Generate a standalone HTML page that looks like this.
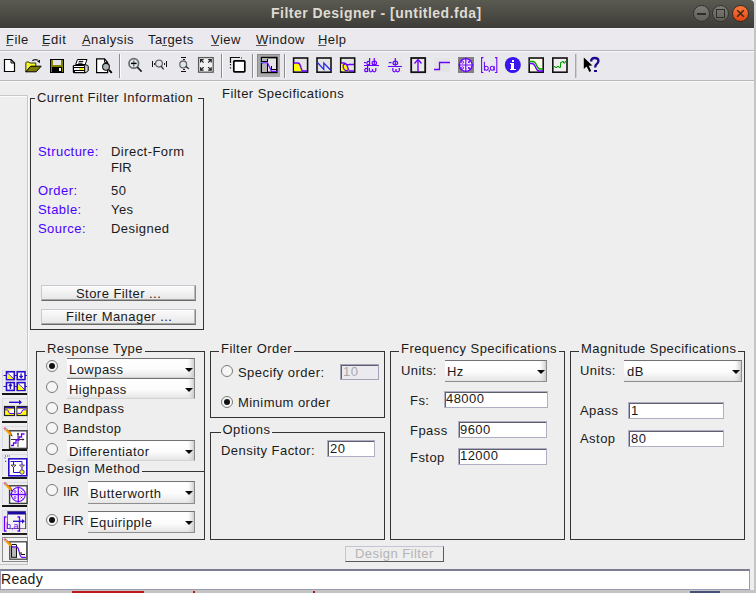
<!DOCTYPE html>
<html><head><meta charset="utf-8">
<style>
*{margin:0;padding:0;box-sizing:border-box}
html,body{width:756px;height:593px;overflow:hidden;background:#eeeeee;font-family:"Liberation Sans",sans-serif;font-size:13px;color:#222}
.a{position:absolute}
.t{position:absolute;white-space:pre;line-height:13px;font-size:13px;letter-spacing:0.45px;color:#1a1a1a}
.b{color:#4a00ff}
#title{left:0;top:0;width:754px;height:28px;background:linear-gradient(#5b5a51,#3d3c38);border-radius:0 4px 0 0}
#menu{left:0;top:28px;width:754px;height:22px;background:#ebe9ed;border-top:1px solid #f4f3f5}
#tb{left:0;top:50px;width:754px;height:31px;background:#e9e8ec;border-top:1px solid #b8b7bb;border-bottom:1px solid #b8b7bb;box-shadow:inset 0 1px 0 #f8f8fa}
.sep{position:absolute;top:54px;width:1px;height:24px;background:#8c8c8c;box-shadow:1px 0 0 #fafafa}
.frame{position:absolute;border:1px solid #333}
.ftitle{position:absolute;white-space:pre;line-height:13px;font-size:13px;letter-spacing:0.45px;color:#1a1a1a;background:#eeeeee;padding:0 2px 0 2px}
.dd{position:absolute;background:linear-gradient(#ffffff 0%,#fcfcfc 55%,#e6e6e6 100%);border-top:1px solid #727272;border-right:1px solid #8a8a8a;border-bottom:1px solid #8e8e8e;box-shadow:inset -6px 0 5px -4px #c4c4c4}
.dd.nb{border-bottom-color:#d4d4d4}
.dd .arr{position:absolute;right:1.5px;top:8.5px;width:0;height:0;border-left:4.5px solid transparent;border-right:4.5px solid transparent;border-top:4.5px solid #0a0a0a}
.radio{position:absolute;width:12px;height:12px;border-radius:50%;border:1px solid #7a7a7a;background:#f6f6f6}
.radio.on::after{content:"";position:absolute;left:2px;top:2px;width:6px;height:6px;border-radius:50%;background:#111}
.tx{position:absolute;background:#fff;border:1px solid #aeaec4;box-shadow:inset 1px 1px 0 #5e5e6e}
.btn{position:absolute;background:linear-gradient(#fbfbfb,#e6e6e6);border:1px solid #c8c8d0;border-bottom:1px solid #6a6a6a;border-right:1px solid #8a8a8a;box-shadow:inset 0 -1px 0 #a8a8a8,inset -1px 0 0 #b8b8b8}
.lt{position:absolute;left:2px;width:26px;height:2px;background:#222}
</style></head><body>

<!-- title bar -->
<div id="title" class="a"></div>
<div class="a" style="left:754px;top:0;width:2px;height:593px;background:#c4c4c4"></div>
<div class="a" style="left:754px;top:0;width:2px;height:28px;background:#d4d4d4"></div>
<div class="t" style="left:271px;top:5.5px;font-size:14px;line-height:14px;font-weight:bold;color:#dfdbd2;letter-spacing:0.48px">Filter Designer - [untitled.fda]</div>
<div class="a" style="left:693px;top:5px;width:17px;height:17px;border-radius:50%;background:linear-gradient(#7d7c76,#5f5e59);border:1px solid #34332f"></div>
<div class="a" style="left:697px;top:13px;width:9px;height:2px;background:#2f2e2a"></div>
<div class="a" style="left:712px;top:5px;width:17px;height:17px;border-radius:50%;background:linear-gradient(#7d7c76,#5f5e59);border:1px solid #34332f"></div>
<div class="a" style="left:716px;top:9px;width:9px;height:9px;border:1.5px solid #2f2e2a"></div>
<div class="a" style="left:732px;top:5px;width:17px;height:17px;border-radius:50%;background:linear-gradient(#f97a3e,#e5450f);border:1px solid #3a2a20"></div>
<svg class="a" style="left:732px;top:5px" width="17" height="17"><path d="M5.2 5.2 L11.8 11.8 M11.8 5.2 L5.2 11.8" stroke="#3a2a1a" stroke-width="1.6"/></svg>

<!-- menu -->
<div id="menu" class="a"></div>
<div class="t" style="left:6px;top:33px">File</div>
<div class="t" style="left:42px;top:33px">Edit</div>
<div class="t" style="left:82px;top:33px">Analysis</div>
<div class="t" style="left:148px;top:33px">Targets</div>
<div class="t" style="left:211px;top:33px">View</div>
<div class="t" style="left:256px;top:33px">Window</div>
<div class="t" style="left:318px;top:33px">Help</div>

<div class="a" style="left:6px;top:45px;width:7px;height:1px;background:#555"></div>
<div class="a" style="left:42px;top:45px;width:7px;height:1px;background:#555"></div>
<div class="a" style="left:82px;top:45px;width:8px;height:1px;background:#555"></div>
<div class="a" style="left:162px;top:45px;width:5px;height:1px;background:#555"></div>
<div class="a" style="left:211px;top:45px;width:8px;height:1px;background:#555"></div>
<div class="a" style="left:256px;top:45px;width:11px;height:1px;background:#555"></div>
<div class="a" style="left:318px;top:45px;width:8px;height:1px;background:#555"></div>
<!-- toolbar -->
<div id="tb" class="a"></div>
<div class="a" style="left:0;top:81px;width:754px;height:1px;background:#fafafa"></div>
<!-- toolbar icons -->
<svg class="a" style="left:0;top:50px" width="620" height="32" viewBox="0 50 620 32" shape-rendering="crispEdges">
<!-- new -->
<path d="M4.5 59.5 H11 L14.5 63 V71.5 H4.5 Z" fill="#fff" stroke="#000" stroke-width="1.2" shape-rendering="auto"/>
<path d="M11 59.5 V63 H14.5" fill="none" stroke="#000" stroke-width="1" shape-rendering="auto"/>
<!-- open -->
<path d="M25.8 71.8 V62.6 Q26 62 27 62 H29 L29.8 63 H35.8 V66.5 H31 L26.5 71.8 Z" fill="#f8f820" stroke="#222210" stroke-width="0.9" shape-rendering="auto"/>
<path d="M26.3 63.5 V71" stroke="#9090a0" stroke-width="0.8" stroke-dasharray="0.8 0.8" shape-rendering="auto"/>
<path d="M25.8 71.8 L30.6 66.2 H41.2 L36.2 71.8 Z" fill="#7c7c00" stroke="#000" stroke-width="1" stroke-linejoin="round" shape-rendering="auto"/>
<path d="M32.3 60.8 Q35 58.8 38 60.2" fill="none" stroke="#222" stroke-width="1.1" shape-rendering="auto"/>
<path d="M37.2 61.2 L40 59.8 L39.8 63.2 Z" fill="#000" shape-rendering="auto"/>
<!-- save -->
<rect x="50" y="59" width="14" height="14" fill="#000"/>
<rect x="51" y="60" width="12" height="12" fill="#808000"/>
<rect x="53" y="60" width="8" height="5" fill="#e4e4e4"/>
<rect x="52" y="67" width="10" height="5" fill="#000"/>
<rect x="59" y="68" width="2" height="3" fill="#fff"/>
<!-- print -->
<path d="M84 64 L87.8 65.5 Q88.5 66 88.3 67 V70.5 Q88 71.5 86.5 72.3 L84 73 Z" fill="#a8a8a8" stroke="#111" stroke-width="1" shape-rendering="auto"/>
<path d="M86.3 66.5 V71" stroke="#eee" stroke-width="0.8" shape-rendering="auto"/>
<rect x="72.8" y="65" width="12" height="8.2" rx="1.2" fill="#000" shape-rendering="auto"/>
<rect x="74" y="66.3" width="10" height="1" fill="#fff"/>
<rect x="73.6" y="68" width="10.6" height="1.6" fill="#f4f4ff"/>
<rect x="78.8" y="68" width="4" height="1.6" fill="#f0f000"/>
<rect x="75" y="71" width="8.5" height="1" fill="#fff"/>
<path d="M77.5 59.5 H87 L85.2 64.5 H75.6 Z" fill="#fff" stroke="#000" stroke-width="1" shape-rendering="auto"/>
<path d="M78.8 61.4 H83.2 M78.2 63.2 H82.6" stroke="#000" stroke-width="1" shape-rendering="auto"/>
<!-- preview -->
<path d="M96.6 58.8 H104.6 L107.6 62.4 V72.6 H96.6 Z" fill="#fff" stroke="#000" stroke-width="1.2" shape-rendering="auto"/>
<path d="M104.6 59 V62.4 H107.4" fill="none" stroke="#000" stroke-width="1" shape-rendering="auto"/>
<circle cx="106" cy="66.8" r="3.4" fill="#b4b4b4" stroke="#111" stroke-width="1.1" shape-rendering="auto"/>
<path d="M104.3 66.5 Q104.8 65 106 64.6" stroke="#30f0f8" stroke-width="1" fill="none" shape-rendering="auto"/>
<rect x="107" y="68" width="1" height="1" fill="#30f0f8"/>
<path d="M109 69.8 L111.8 72.8" stroke="#000" stroke-width="1.9" shape-rendering="auto"/>
<!-- sep -->
<rect x="119" y="54" width="1" height="24" fill="#8a8a8a"/><rect x="120" y="54" width="1" height="24" fill="#fcfcfc"/>
<!-- zoom in -->
<circle cx="133.8" cy="63.4" r="4.8" fill="#dfe8f0" stroke="#6c6c6c" stroke-width="1.7" shape-rendering="auto"/>
<path d="M133.8 60.6 V66.4" stroke="#666" stroke-width="1.4" shape-rendering="auto"/>
<path d="M131 63.4 H136.6" stroke="#000" stroke-width="1.4" shape-rendering="auto"/>
<path d="M137.2 67 L141.6 71.6" stroke="#1a1a1a" stroke-width="1.6" shape-rendering="auto"/>
<!-- zoom x -->
<rect x="152" y="61" width="1" height="5.5" fill="#111"/>
<rect x="166" y="61" width="1" height="5.5" fill="#111"/>
<rect x="154" y="62.5" width="1" height="2.5" fill="#222"/>
<rect x="164" y="62.5" width="1" height="2.5" fill="#222"/>
<circle cx="159" cy="63.6" r="3.4" fill="#dfe8f0" stroke="#6a6a6a" stroke-width="1.3" shape-rendering="auto"/>
<path d="M161 66 L163.6 69.4" stroke="#333" stroke-width="1.3" shape-rendering="auto"/>
<!-- zoom y -->
<rect x="181" y="57" width="5" height="1" fill="#111"/>
<rect x="181" y="71" width="5" height="1" fill="#111"/>
<rect x="182.5" y="59" width="2" height="1" fill="#222"/>
<rect x="182.5" y="69" width="2" height="1" fill="#222"/>
<circle cx="183.2" cy="64.4" r="3.4" fill="#dfe8f0" stroke="#6a6a6a" stroke-width="1.3" shape-rendering="auto"/>
<path d="M185.6 66.4 L189 68.8" stroke="#333" stroke-width="1.3" shape-rendering="auto"/>
<!-- full view -->
<rect x="198.6" y="57.6" width="14.6" height="14.6" fill="#f0f0f0" stroke="#5a5a5a" stroke-width="1.3" shape-rendering="auto"/>
<g stroke="#222" stroke-width="1.2" fill="none" shape-rendering="auto">
<path d="M200.6 62.6 V59.6 H203.6 M200.9 59.9 L203.6 62.6"/>
<path d="M211.2 62.6 V59.6 H208.2 M210.9 59.9 L208.2 62.6"/>
<path d="M200.6 67.2 V70.2 H203.6 M200.9 69.9 L203.6 67.2"/>
<path d="M211.2 67.2 V70.2 H208.2 M210.9 69.9 L208.2 67.2"/>
</g>
<!-- sep -->
<rect x="221" y="54" width="1" height="24" fill="#8a8a8a"/><rect x="222" y="54" width="1" height="24" fill="#fcfcfc"/>
<!-- new window -->
<path d="M230.5 63 V57.5 H240" fill="none" stroke="#111" stroke-width="1.2" shape-rendering="auto"/>
<path d="M230.5 64 V70" fill="none" stroke="#111" stroke-width="1.2" stroke-dasharray="1.2 2" shape-rendering="auto"/>
<path d="M241 58 H243" fill="none" stroke="#111" stroke-width="1" stroke-dasharray="1 1" shape-rendering="auto"/>
<rect x="233.8" y="60.8" width="11" height="11" fill="#fff" stroke="#000" stroke-width="1.7" rx="0.8" shape-rendering="auto"/>
<!-- sep -->
<rect x="252" y="54" width="1" height="24" fill="#8a8a8a"/><rect x="253" y="54" width="1" height="24" fill="#fcfcfc"/>
<!-- pressed button -->
<rect x="257" y="54" width="23" height="23" fill="#a9a9a9"/>
<rect x="257" y="54" width="23" height="1" fill="#8a8a8a"/>
<rect x="257" y="54" width="1" height="23" fill="#8a8a8a"/>
<rect x="261.6" y="57.6" width="15.2" height="14.8" fill="#e6e6e6" stroke="#000" stroke-width="1.6" shape-rendering="auto"/>
<rect x="262" y="58" width="5" height="4" fill="#b4b4b4"/>
<rect x="262" y="64" width="5" height="8" fill="#b4b4b4"/>
<rect x="262" y="61" width="5" height="1" fill="#000"/>
<rect x="267" y="63" width="1" height="9" fill="#000"/>
<rect x="267" y="59" width="1" height="3" fill="#000"/>
<path d="M261.5 62.8 H267.5 L271.5 71.3 H277" fill="none" stroke="#6a10ff" stroke-width="1.2" shape-rendering="auto"/>
<rect x="261" y="62" width="2" height="1" fill="#20a0ff"/>
<path d="M271.5 66 V69.5 H277" fill="none" stroke="#000" stroke-width="1"/>
<!-- sep -->
<rect x="284" y="54" width="1" height="24" fill="#8a8a8a"/><rect x="285" y="54" width="1" height="24" fill="#fcfcfc"/>
<!-- magnitude -->
<rect x="293.6" y="58" width="14" height="14.2" fill="#e4e4e4" stroke="#111" stroke-width="1.6" shape-rendering="auto"/>
<path d="M294 63 H298 Q299.5 63 300.5 66 Q301.8 71 303 71 H294 Z" fill="#ffff00" shape-rendering="auto"/>
<path d="M294 63 H298 Q299.5 63 300.5 66 Q301.8 71 303 71 H307" fill="none" stroke="#6a00ff" stroke-width="1.4" shape-rendering="auto"/>
<!-- phase -->
<rect x="317" y="58" width="14" height="14.2" fill="#e4e4e4" stroke="#111" stroke-width="1.6" shape-rendering="auto"/>
<path d="M317 62 L323.8 69.5 V63 L331 70.5" fill="none" stroke="#2424e8" stroke-width="1.2" shape-rendering="auto"/>
<!-- mag & phase -->
<rect x="340.7" y="58" width="14" height="14.2" fill="#e4e4e4" stroke="#111" stroke-width="1.6" shape-rendering="auto"/>
<path d="M341 63 H344 Q346 63 347 66 Q348 71 350 71 H341 Z" fill="#ffff00" shape-rendering="auto"/>
<path d="M341 63 H344 Q346 63 347 65.5 L348.5 69.5 Q348 70.8 346 70.5 Q343.5 70 343 66 Q344 63 347 64.5 Q348.5 65 349 64.5 Q350 64.5 354 64.5 M349 71 H354" fill="none" stroke="#6a00ff" stroke-width="1.3" shape-rendering="auto"/>
<!-- group delay -->
<rect x="363" y="58" width="16" height="14" fill="#e6e6e8"/>
<g fill="none" stroke="#6a00ff" stroke-width="1.2" shape-rendering="auto">
<path d="M364 62.6 H366.2"/>
<path d="M369.6 58 V65 M369.6 62 Q368.5 61 367.6 61.5 Q366.6 62.5 367 64 Q368 65.3 369.6 64"/>
<path d="M374.3 58 V65.5"/>
<ellipse cx="374.3" cy="63" rx="2.2" ry="1.9"/>
<path d="M367.6 66 V72 M367.6 69 Q366.5 68 365.4 68.6 Q364.4 69.6 364.8 71 Q366 72.3 367.6 71"/>
<path d="M369.4 68 V70.5 Q369.6 71.8 370.8 71.8 Q372.2 71.6 372.5 70 V69 M372.5 70 Q372.8 71.8 374.2 71.8 Q375.6 71.6 375.8 70.5 V68"/>
</g>
<rect x="364" y="65" width="14.5" height="1.2" fill="#6a00ff"/>
<!-- phase delay -->
<rect x="387" y="58" width="16" height="14" fill="#e6e6e8"/>
<g fill="none" stroke="#6a00ff" stroke-width="1.2" shape-rendering="auto">
<path d="M388.8 62.6 H391.6" stroke="#3a2ae0"/>
<path d="M395.3 58 V65.5"/>
<ellipse cx="395.3" cy="63" rx="2.3" ry="1.9"/>
<path d="M392.8 68 V70.5 Q393 71.8 394.3 71.8 Q395.8 71.6 396 70 V69 M396 70 Q396.3 71.8 397.7 71.8 Q399.1 71.6 399.3 70.5 V68"/>
</g>
<rect x="388" y="65.8" width="14" height="1.2" fill="#6a00ff"/>
<!-- impulse -->
<rect x="411.2" y="58" width="14" height="14.2" fill="#e8e8e8" stroke="#111" stroke-width="1.8" shape-rendering="auto"/>
<path d="M418 72 V60" stroke="#6a00ff" stroke-width="1.4" shape-rendering="auto"/>
<path d="M414.5 63.5 L418 59.5 L421.5 63.5" fill="none" stroke="#6a00ff" stroke-width="1.3" shape-rendering="auto"/>
<!-- step -->
<rect x="434" y="58" width="16" height="14" fill="#e4e4e4"/>
<path d="M434 69.5 H439.5 V62.5 H450" fill="none" stroke="#6a00ff" stroke-width="1.3" shape-rendering="auto"/>
<!-- pole zero -->
<rect x="458" y="57" width="16" height="16" fill="#808080"/>
<circle cx="465.8" cy="65" r="6.4" fill="#f6f2ff" stroke="#6a00ff" stroke-width="1.4" shape-rendering="auto"/>
<path d="M458.5 65 H473.5 M465.8 57.5 V72.5" stroke="#6a00ff" stroke-width="1.2" shape-rendering="auto"/>
<circle cx="462.6" cy="62.2" r="1.1" fill="none" stroke="#6a00ff" stroke-width="0.9" shape-rendering="auto"/>
<circle cx="462.6" cy="67.8" r="1.1" fill="none" stroke="#6a00ff" stroke-width="0.9" shape-rendering="auto"/>
<path d="M467.8 61 L470 63.2 M470 61 L467.8 63.2 M467.8 66.8 L470 69 M470 66.8 L467.8 69" stroke="#6a00ff" stroke-width="0.9" shape-rendering="auto"/>
<!-- [b,a] -->
<g fill="none" stroke="#6a00ff" stroke-width="1.05" shape-rendering="auto">
<path d="M483.4 57.6 H481.6 V72.4 H483.4 M495 57.6 H496.8 V72.4 H495"/>
<path d="M484.4 61.8 V70.4"/>
<ellipse cx="486.4" cy="68.3" rx="1.9" ry="2"/>
<path d="M489.6 69.8 L489 72"/>
<ellipse cx="492.2" cy="68.3" rx="1.9" ry="2"/>
<path d="M494.2 66.2 V70.4"/>
</g>
<!-- info -->
<circle cx="512.8" cy="65" r="8" fill="#3a14ec" shape-rendering="auto"/>
<rect x="512" y="60" width="2" height="2" fill="#fff"/>
<rect x="511" y="63" width="3" height="6" fill="#fff"/>
<rect x="510" y="69" width="6" height="1" fill="#fff"/>
<rect x="510" y="63" width="2" height="1" fill="#fff"/>
<!-- mag estimate -->
<rect x="529.2" y="58" width="14" height="14.2" fill="#fffbe8" stroke="#111" stroke-width="1.6" shape-rendering="auto"/>
<path d="M529 61.5 H533 Q535 61.5 536.5 65 Q538 69 540 69 H543" fill="none" stroke="#00a000" stroke-width="1.3" shape-rendering="auto"/>
<path d="M529 63.5 H532 Q534 63.5 535.5 67 Q537 71 539 71 H543" fill="none" stroke="#6a00ff" stroke-width="1.3" shape-rendering="auto"/>
<!-- round-off -->
<rect x="552.8" y="58" width="14.2" height="14.2" fill="#f0ecf0" stroke="#111" stroke-width="1.6" shape-rendering="auto"/>
<path d="M553 66.5 H555 V67.5 H557 V66.5 H559 V67.5 H560.5 V62.5 H562 V61.5 H563.5 V63 H565 V61.5 H567" fill="none" stroke="#00a000" stroke-width="1" shape-rendering="auto"/>
<!-- sep -->
<rect x="575" y="54" width="1" height="24" fill="#a8a8a8"/>
<rect x="576" y="54" width="1" height="24" fill="#d0d0d0"/>
<!-- whats this -->
<path d="M583.8 57.6 V69 L586.6 66.6 L589.4 72 L591.2 71 L588.8 65.8 L592.4 65.6 Z" fill="#000" shape-rendering="auto"/>
<path d="M591.2 61.5 Q591 58 594.8 58 Q598.5 58 598.4 61 Q598.3 63 596.5 64.2 Q595.2 65 595.2 67.5" fill="none" stroke="#1c0a8c" stroke-width="2.4" shape-rendering="auto"/>
<rect x="594" y="69.5" width="2.6" height="2.6" fill="#1c0a8c"/>
</svg>

<!-- main -->
<div class="a" style="left:0;top:95px;width:28px;height:1px;background:#c8c8c8"></div>
<div class="a" style="left:0;top:96px;width:27px;height:1px;background:#fbfbfb"></div>
<div class="a" style="left:27px;top:96px;width:1px;height:468px;background:#c8c8c8"></div>
<div class="a" style="left:28px;top:95px;width:1px;height:470px;background:#fbfbfb"></div>

<!-- left toolbar -->
<svg class="a" style="left:0;top:360px" width="30" height="210" viewBox="0 360 30 210">
<defs>
<g id="pencil">
<path d="M5 4.5 L11.3 10.8" stroke="#f0a800" stroke-width="2.6"/>
<path d="M6.2 4.6 L11.8 10.2" stroke="#e85000" stroke-width="0.9"/>
<path d="M4.2 3.7 L5.8 5.3" stroke="#e87890" stroke-width="2.6"/>
<path d="M5.6 5.1 L6.6 6.1" stroke="#b8b8c0" stroke-width="2.6"/>
<path d="M10.4 11.6 L12.6 12.6 L11.9 10.3 Z" fill="#333"/>
</g>
</defs>
<!-- bars -->
<rect x="2" y="393" width="25" height="2" fill="#151515"/>
<rect x="2" y="421" width="25" height="2" fill="#1e1e1e"/>
<rect x="2" y="449" width="25" height="2" fill="#151515"/>
<rect x="2" y="477" width="25" height="2" fill="#1e1e1e"/>
<rect x="2" y="505" width="25" height="2" fill="#151515"/>
<rect x="2" y="533" width="25" height="2" fill="#1e1e1e"/>
<!-- button faces highlights -->
<rect x="2" y="370" width="25" height="1" fill="#dcdce8"/>
<rect x="2" y="370" width="1" height="22" fill="#dcdce8"/>
<rect x="2" y="398" width="25" height="1" fill="#dcdce8"/>
<rect x="2" y="398" width="1" height="22" fill="#dcdce8"/>
<rect x="2" y="426" width="25" height="1" fill="#dcdce8"/>
<rect x="2" y="426" width="1" height="22" fill="#dcdce8"/>
<rect x="2" y="454" width="25" height="1" fill="#dcdce8"/>
<rect x="2" y="454" width="1" height="22" fill="#dcdce8"/>
<rect x="2" y="482" width="25" height="1" fill="#dcdce8"/>
<rect x="2" y="482" width="1" height="22" fill="#dcdce8"/>
<rect x="2" y="510" width="25" height="1" fill="#dcdce8"/>
<rect x="2" y="510" width="1" height="22" fill="#dcdce8"/>
<!-- icon1: 4 blocks -->
<g stroke="#2a10c8" fill="#fff">
<path d="M3.5 375.5 H27 M3.5 386.5 H27" stroke-width="1.2" fill="none"/>
<rect x="6.5" y="371.8" width="7.8" height="7.8" stroke-width="1.6"/>
<rect x="17.2" y="371.8" width="7.8" height="7.8" stroke-width="1.6"/>
<rect x="6.5" y="382.6" width="7.8" height="7.8" stroke-width="1.6"/>
<rect x="17.2" y="382.6" width="7.8" height="7.8" stroke-width="1.6"/>
</g>
<path d="M7.3 374 L13.5 379 H7.3 Z" fill="#ffff00"/>
<path d="M18 385 L24.2 390 H18 Z" fill="#ffff00"/>
<path d="M7 372.5 L14 379 M17.8 383.2 L24.8 389.8" stroke="#2a10c8" stroke-width="0.9"/>
<path d="M21.1 373.5 V377 M19.5 375.8 L21.1 377.8 L22.7 375.8" stroke="#2a10c8" stroke-width="1.3" fill="none"/>
<path d="M10.4 389 V384.5 M8.8 386.2 L10.4 384 L12 386.2" stroke="#2a10c8" stroke-width="1.3" fill="none"/>
<!-- icon2: transform -->
<path d="M9 402.3 H20" stroke="#2a10c8" stroke-width="1.4"/>
<path d="M19 399.8 L22 402.3 L19 404.8 Z" fill="#2a10c8"/>
<rect x="4.5" y="406.5" width="10" height="9" fill="#ffff00" stroke="#222" stroke-width="1.2"/>
<rect x="5" y="407" width="9" height="1.5" fill="#2a10c8"/>
<path d="M5 409.5 H7.5 L9.5 413.5 H14 V409 H11 L9.5 412 Z" fill="#fff"/>
<path d="M5 409.8 H7.5 L9.5 413.5 H14" stroke="#6a00ff" stroke-width="1" fill="none"/>
<rect x="17" y="406.5" width="10" height="9" fill="#ffff00" stroke="#222" stroke-width="1.2"/>
<rect x="17.5" y="407" width="9" height="1.5" fill="#2a10c8"/>
<path d="M17.5 409 H26.5 V410 H23.5 L22 413.3 H17.5 Z" fill="#fff"/>
<path d="M17.5 413.3 H21 L22.8 409.8 H26.5" stroke="#6a00ff" stroke-width="1" fill="none"/>
<!-- icon3: quantize -->
<rect x="9.6" y="430.8" width="17.5" height="17.6" fill="#fff" stroke="#3c3c3c" stroke-width="1.4"/>
<path d="M11 439.5 H24 M18 433 V447" stroke="#222" stroke-width="0.9"/>
<path d="M24.5 439.5 L22.5 438.3 V440.7 Z M18 432.5 L16.8 434.5 H19.2 Z" fill="#222"/>
<path d="M11 445.5 H13.5 V443 H16 V440 H19 V437 H21.5 V434 H24.5" stroke="#6a00ff" stroke-width="1.3" fill="none"/>
<use href="#pencil" x="0" y="424"/>
<!-- icon4: structure -->
<path d="M5 456 H10 M4.5 458 H6 M6 461 L4.5 462.5" stroke="#2a10c8" stroke-width="1.1" stroke-dasharray="1 1.2" fill="none"/>
<rect x="8.8" y="458.8" width="18" height="17" fill="#fff" stroke="#2a10c8" stroke-width="1.6"/>
<path d="M10.5 461.5 H22 V466 M13.5 461.5 V472.5 H22 M22 466 V472" stroke="#2a10c8" stroke-width="1" fill="none"/>
<path d="M11 465 H16 L13.5 467.5 Z M19.5 465 H24.5 L22 467.5 Z" fill="#ffff00" stroke="#2a10c8" stroke-width="0.8"/>
<circle cx="22" cy="472" r="2.2" fill="#ffff00" stroke="#2a10c8" stroke-width="0.8"/>
<!-- icon5: pz editor -->
<rect x="9.6" y="485.8" width="17.5" height="17.6" fill="#fff" stroke="#3c3c3c" stroke-width="1.4"/>
<circle cx="18.3" cy="494.5" r="7" fill="none" stroke="#6a00ff" stroke-width="1.1"/>
<path d="M10 494.5 H26.5 M18.3 486.5 V502.5" stroke="#6a00ff" stroke-width="1.3"/>
<circle cx="15" cy="491.5" r="1" fill="none" stroke="#6a00ff" stroke-width="0.8"/>
<circle cx="15" cy="497.5" r="1" fill="none" stroke="#6a00ff" stroke-width="0.8"/>
<path d="M20.5 490.5 L22.5 492.5 M22.5 490.5 L20.5 492.5 M20.5 496.5 L22.5 498.5 M22.5 496.5 L20.5 498.5" stroke="#6a00ff" stroke-width="0.8"/>
<use href="#pencil" x="0" y="479"/>
<!-- icon6: import -->
<rect x="7.5" y="511.5" width="18" height="17" fill="#f4f4f4" stroke="#777" stroke-width="1"/>
<rect x="25" y="513" width="1.2" height="16" fill="#555"/>
<rect x="8" y="511.5" width="17.5" height="3" fill="#1c0aa0"/>
<path d="M13 521.3 H23" stroke="#2a10c8" stroke-width="1.3"/>
<path d="M22 519 L25 521.3 L22 523.6 Z" fill="#2a10c8"/>
<path d="M6.5 517 H4.5 V531 H6.5 M17.5 517 H19.5 V531 H17.5" stroke="#6a00ff" stroke-width="1.3" fill="none"/>
<text x="6" y="528.5" font-family="Liberation Sans" font-size="9" fill="#6a00ff">b,a</text>
<!-- icon7: design (pressed) -->
<rect x="2.5" y="537.5" width="25" height="24" fill="#f2f2f4" stroke="#8c8c8c" stroke-width="1"/>
<rect x="9.8" y="541.8" width="17" height="17.4" fill="#fff" stroke="#444" stroke-width="1.3"/>
<rect x="12" y="547" width="4" height="10" fill="#b8b8b8"/>
<path d="M11.5 544.5 H16.5 M11.3 557.3 H16.8 M11.5 545 V557.5 M16.5 545 V557.5" stroke="#111" stroke-width="1"/>
<path d="M11.5 546.8 H16.8 Q18 547 19 551 Q20 557 22 557.3 H25.8" stroke="#6a00ff" stroke-width="1.2" fill="none"/>
<path d="M21 552 V554.5 H25" stroke="#111" stroke-width="1" fill="none"/>
<use href="#pencil" x="0" y="535"/>
<rect x="0" y="564" width="28" height="1" fill="#c4c4c4"/>
</svg>

<!-- Current filter information -->
<div class="frame" style="left:30px;top:98px;width:174px;height:232px"></div>
<div class="ftitle" style="left:35px;top:91px;padding-right:5px;line-height:14px">Current Filter Information</div>
<div class="t b" style="left:38px;top:145px">Structure:</div>
<div class="t" style="left:111px;top:145px">Direct-Form</div>
<div class="t" style="left:111px;top:161px;letter-spacing:-0.2px">FIR</div>
<div class="t b" style="left:38px;top:184px">Order:</div>
<div class="t" style="left:111px;top:184px">50</div>
<div class="t b" style="left:38px;top:203px">Stable:</div>
<div class="t" style="left:111px;top:203px">Yes</div>
<div class="t b" style="left:38px;top:222px">Source:</div>
<div class="t" style="left:111px;top:222px">Designed</div>
<div class="btn" style="left:41px;top:285px;width:155px;height:16px"></div>
<div class="t" style="left:76px;top:287px">Store Filter ...</div>
<div class="btn" style="left:41px;top:309px;width:155px;height:16px"></div>
<div class="t" style="left:66px;top:310px">Filter Manager ...</div>

<div class="t" style="left:222px;top:87px">Filter Specifications</div>

<!-- Response type -->
<div class="frame" style="left:36px;top:351px;width:169px;height:189px"></div>
<div class="ftitle" style="left:45px;top:342px">Response Type</div>
<div class="radio on" style="left:46px;top:360px"></div>
<div class="dd nb" style="left:67px;top:358px;width:128px;height:20px"><div class="arr"></div></div>
<div class="t" style="left:69px;top:363px">Lowpass</div>
<div class="radio" style="left:46px;top:381px"></div>
<div class="dd nb" style="left:67px;top:378px;width:128px;height:21px"><div class="arr"></div></div>
<div class="t" style="left:69px;top:383px">Highpass</div>
<div class="radio" style="left:46px;top:402px"></div>
<div class="t" style="left:63px;top:402px">Bandpass</div>
<div class="radio" style="left:46px;top:422px"></div>
<div class="t" style="left:63px;top:422px">Bandstop</div>
<div class="radio" style="left:46px;top:443px"></div>
<div class="dd nb" style="left:67px;top:440px;width:128px;height:21px"><div class="arr"></div></div>
<div class="t" style="left:69px;top:445px">Differentiator</div>
<div class="a" style="left:36px;top:471px;width:169px;height:1px;background:#333"></div>
<div class="ftitle" style="left:45px;top:462px">Design Method</div>
<div class="radio" style="left:46px;top:484px"></div>
<div class="t" style="left:63px;top:485px;letter-spacing:-0.2px">IIR</div>
<div class="dd" style="left:88px;top:481px;width:107px;height:23px"><div class="arr"></div></div>
<div class="t" style="left:90px;top:487px">Butterworth</div>
<div class="radio on" style="left:46px;top:514px"></div>
<div class="t" style="left:63px;top:514px;letter-spacing:-0.2px">FIR</div>
<div class="dd" style="left:88px;top:511px;width:107px;height:22px"><div class="arr"></div></div>
<div class="t" style="left:90px;top:516px">Equiripple</div>

<!-- Filter order -->
<div class="frame" style="left:210px;top:351px;width:175px;height:67px"></div>
<div class="ftitle" style="left:219px;top:342px">Filter Order</div>
<div class="radio" style="left:221px;top:365px"></div>
<div class="t" style="left:238px;top:366px">Specify order:</div>
<div class="tx" style="left:340px;top:364px;width:39px;height:16px;background:#ebebef;border-color:#a4a4b8"></div>
<div class="t" style="left:343px;top:365px;color:#a8a8a8">10</div>
<div class="radio on" style="left:221px;top:396px"></div>
<div class="t" style="left:238px;top:396px">Minimum order</div>

<!-- Options -->
<div class="frame" style="left:210px;top:432px;width:175px;height:108px"></div>
<div class="ftitle" style="left:220.5px;top:423px">Options</div>
<div class="t" style="left:221px;top:444px">Density Factor:</div>
<div class="tx" style="left:327px;top:440px;width:48px;height:17px"></div>
<div class="t" style="left:330px;top:442px">20</div>

<!-- Frequency specs -->
<div class="frame" style="left:390px;top:351px;width:175px;height:189px"></div>
<div class="ftitle" style="left:399px;top:342px">Frequency Specifications</div>
<div class="t" style="left:401px;top:364px">Units:</div>
<div class="dd" style="left:445px;top:360px;width:102px;height:22px"><div class="arr"></div></div>
<div class="t" style="left:447px;top:365px">Hz</div>
<div class="t" style="left:410px;top:394px">Fs:</div>
<div class="tx" style="left:444px;top:391px;width:104px;height:17px"></div>
<div class="t" style="left:446px;top:392px">48000</div>
<div class="t" style="left:410px;top:424px">Fpass</div>
<div class="tx" style="left:458px;top:421px;width:89px;height:17px"></div>
<div class="t" style="left:460px;top:423px">9600</div>
<div class="t" style="left:410px;top:450.5px">Fstop</div>
<div class="tx" style="left:458px;top:448px;width:89px;height:17px"></div>
<div class="t" style="left:460px;top:449px">12000</div>

<!-- Magnitude specs -->
<div class="frame" style="left:570px;top:351px;width:175px;height:189px"></div>
<div class="ftitle" style="left:579px;top:342px">Magnitude Specifications</div>
<div class="t" style="left:580px;top:364px">Units:</div>
<div class="dd" style="left:624px;top:360px;width:118px;height:22px"><div class="arr"></div></div>
<div class="t" style="left:627px;top:365px">dB</div>
<div class="t" style="left:580px;top:404px">Apass</div>
<div class="tx" style="left:628px;top:402px;width:96px;height:17px"></div>
<div class="t" style="left:631px;top:404px">1</div>
<div class="t" style="left:580px;top:432px">Astop</div>
<div class="tx" style="left:628px;top:430px;width:96px;height:17px"></div>
<div class="t" style="left:631px;top:432px">80</div>

<!-- design filter button -->
<div class="a" style="left:345px;top:546px;width:99px;height:16px;border:1px solid #c4c4d4;border-right:1px solid #5a5a5a;border-bottom:1px solid #5a5a5a;background:#eeeeee"></div>
<div class="t" style="left:355px;top:547px;color:#b4b4b4">Design Filter</div>

<!-- status bar -->
<div class="a" style="left:0;top:569px;width:750px;height:21px;background:#fff;border:1px solid #9a9ab0;border-top:2px solid #7c7c92"></div>
<div class="t" style="left:1px;top:572px;font-size:14px;line-height:14px;letter-spacing:0.3px">Ready</div>
<div class="a" style="left:0;top:590px;width:756px;height:3px;background:#c4c4c4"></div>
<div class="a" style="left:72px;top:591px;width:72px;height:2px;background:#c01818"></div>
<div class="a" style="left:193px;top:591px;width:2px;height:2px;background:#c01818"></div>
<div class="a" style="left:313px;top:591px;width:2px;height:2px;background:#a01830"></div>
<div class="a" style="left:690px;top:591px;width:30px;height:2px;background:#44507a"></div>

</body></html>
